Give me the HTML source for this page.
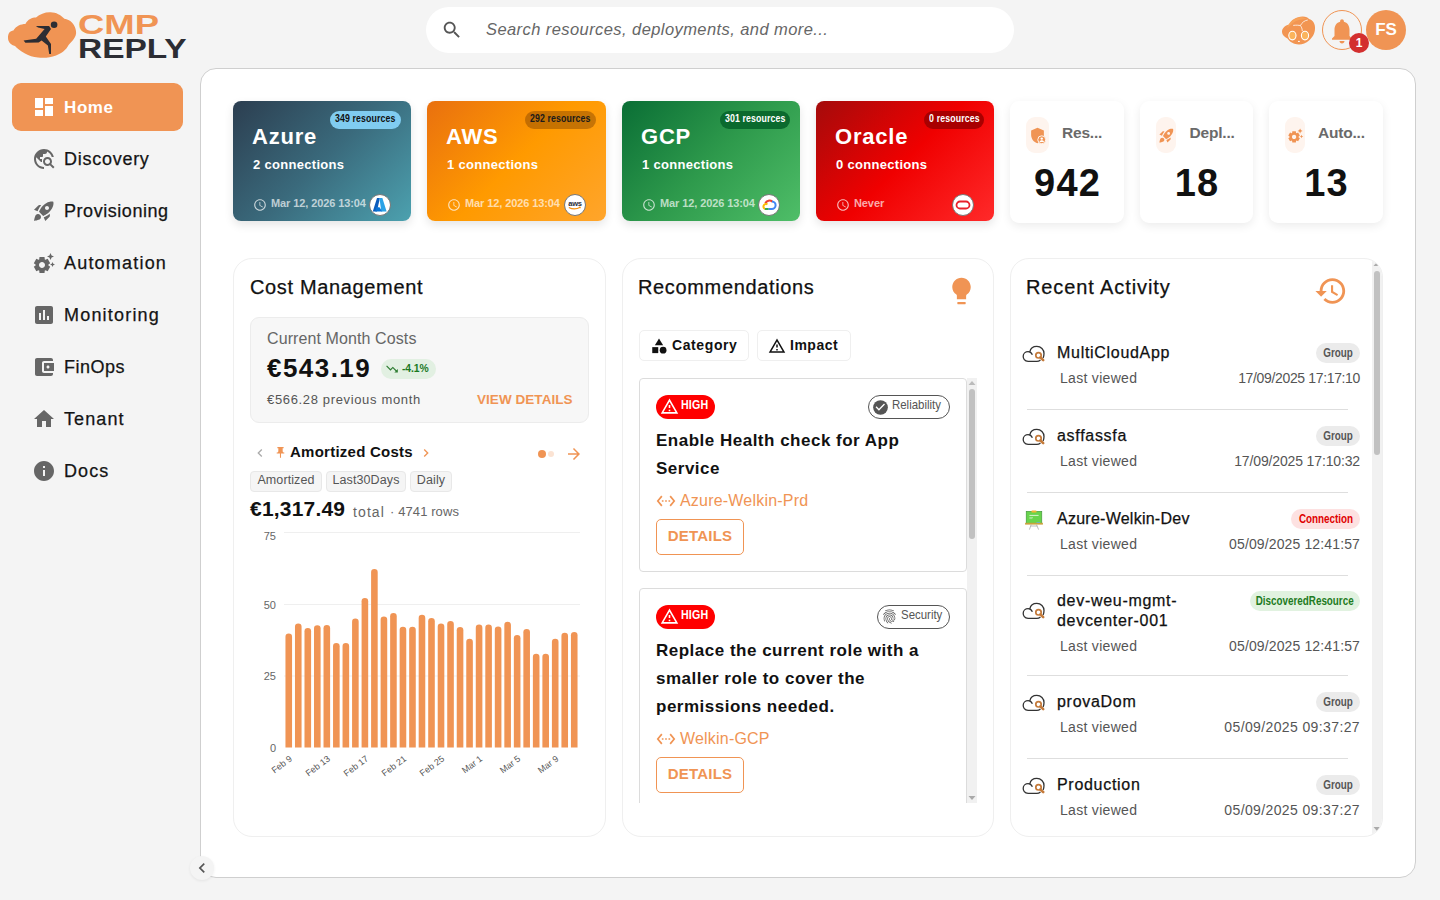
<!DOCTYPE html>
<html><head><meta charset="utf-8">
<style>
*{box-sizing:border-box;margin:0;padding:0}
html,body{width:1440px;height:900px;overflow:hidden}
body{background:#f4f4f4;font-family:"Liberation Sans",sans-serif;color:#141414;position:relative}
.a{position:absolute}
.t{position:absolute;white-space:nowrap;line-height:1}
svg{display:block}
/* sidebar */
.nav{position:absolute;left:12px;width:171px;height:48px;border-radius:9px}
.nav svg{position:absolute;left:20px;top:12px}
.nav span{position:absolute;left:52px;top:15px;font-size:18px;letter-spacing:1.1px;line-height:1;white-space:nowrap;-webkit-text-stroke:.25px #141414}
.nav.act{background:#f09454;color:#fff}
.nav.act span{-webkit-text-stroke:0;font-weight:bold;font-size:17px;letter-spacing:0.6px;top:15.5px;left:52px}
/* main */
#main{position:absolute;left:200px;top:68px;width:1216px;height:810px;background:#fff;border:1px solid #cfcfcf;border-radius:16px}
.cc{position:absolute;top:101px;height:120px;border-radius:8px;box-shadow:0 4px 10px rgba(0,0,0,.10);color:#fff;overflow:hidden}
.cc .nm{position:absolute;left:19px;top:24.5px;font-size:22px;font-weight:bold;line-height:1;letter-spacing:.8px}
.cc .cn{position:absolute;left:20px;top:57px;font-size:13px;font-weight:bold;line-height:1;letter-spacing:.3px}
.cc .bd{position:absolute;right:10px;top:10px;height:18px;border-radius:9px;font-size:10.2px;font-weight:bold;line-height:16.5px;text-align:center;white-space:nowrap}
.cc .bd span{display:inline-block;transform:scaleX(.86);margin:0 -20px;letter-spacing:.15px}
.cc .dt{position:absolute;left:20px;top:97px;font-size:11px;font-weight:bold;line-height:1;color:rgba(255,255,255,.68);letter-spacing:-.1px}
.cc .dt svg{position:absolute;left:0;top:0}
.cc .dt span{position:absolute;left:18px;top:0;white-space:nowrap}
.cc .lg{position:absolute;top:92.5px;width:22px;height:22px;border-radius:50%;background:#fff;border:1px solid #777}
.sc{position:absolute;top:101px;height:122px;border-radius:9px;background:#fff;box-shadow:0 3px 10px rgba(0,0,0,.08)}
.sc .ib{position:absolute;left:16px;top:16px;width:23px;height:36px;border-radius:9px;background:#fef4ee}
.sc .ib svg{position:absolute;left:50%;margin-left:-8.5px;top:10px}
.sc .lb{position:absolute;left:52px;top:23.5px;font-size:15.5px;letter-spacing:-.2px;font-weight:bold;color:#6a6a6a;line-height:1}
.sc .vl{position:absolute;left:0;right:0;top:63px;text-align:center;font-size:38px;font-weight:bold;line-height:1;color:#111;letter-spacing:1.2px;text-indent:1.2px}
.pn{position:absolute;top:258px;width:373px;height:579px;border:1px solid #efefef;border-radius:19px;background:#fff;overflow:hidden}
.pt{position:absolute;font-size:20px;line-height:1;letter-spacing:.45px;color:#111;white-space:nowrap;-webkit-text-stroke:.25px #111}

.gb{position:absolute;left:250px;top:317px;width:339px;height:106px;background:#f7f7f7;border:1px solid #ececec;border-radius:9px}
.chip{position:absolute;top:471px;height:21px;border:1px solid #e8e8e8;background:#f5f5f5;border-radius:4px;font-size:12.5px;line-height:17px;color:#555;text-align:center;white-space:nowrap;letter-spacing:.1px}
.fchip{position:absolute;top:330px;height:31px;border:1px solid #efefef;background:#fff;border-radius:5px;font-size:14px;font-weight:bold;line-height:29px;color:#111;white-space:nowrap}
.rc{position:absolute;left:639px;width:328px;border:1px solid #dcdcdc;border-radius:4px;background:#fff}
.high{position:absolute;left:16px;width:59px;height:24px;border-radius:12px;background:#f00;color:#fff}
.high span{position:absolute;left:25px;top:3px;font-size:13px;font-weight:bold;line-height:1;transform:scaleX(.82);transform-origin:0 0;letter-spacing:.2px}
.tag{position:absolute;height:24px;border:1px solid #555;border-radius:12px;color:#555}
.tag span{position:absolute;top:1.5px;font-size:13px;line-height:1;transform:scaleX(.88);transform-origin:0 0;white-space:nowrap}
.rtitle{position:absolute;left:16px;font-size:17px;font-weight:bold;line-height:28px;letter-spacing:.5px;color:#111;width:300px}
.rlink{position:absolute;left:16px;font-size:16px;color:#f09454;line-height:1;white-space:nowrap;letter-spacing:.2px}
.rlink span{position:absolute;left:24px;top:0}
.dbtn{position:absolute;left:16px;width:88px;height:36px;border:1px solid #f09454;border-radius:5px;color:#f09454;font-size:15px;font-weight:bold;line-height:31px;text-align:center;letter-spacing:.2px}
.ri{position:absolute;left:1011px;width:360px}
.ri .ic{position:absolute;left:7px}
.ri .nmv{position:absolute;left:46px;font-size:16px;line-height:20px;letter-spacing:.7px;color:#111;white-space:nowrap;-webkit-text-stroke:.25px #111}
.ri .lv{position:absolute;left:49px;font-size:14px;line-height:1;color:#555;letter-spacing:.3px;white-space:nowrap}
.ri .dtv{position:absolute;right:11px;font-size:14px;line-height:1;color:#555;letter-spacing:-.35px;white-space:nowrap}
.ri .pill{position:absolute;right:11px;height:20px;border-radius:10px;font-size:12px;font-weight:bold;line-height:20px;padding:0;white-space:nowrap}
.ri .pill span{display:inline-block;transform:scaleX(.82);transform-origin:50% 50%;margin:0 -20px}
.dv{position:absolute;left:1027px;width:321px;height:1px;background:#dedede}
</style></head>
<body>
<!-- LOGO -->
<svg class="a" style="left:0;top:0" width="80" height="64" viewBox="0 0 80 64">
 <path d="M8 38 C8 33 10 31 13.4 30.5 C16 26 21 24 25.4 24 C28 19 32 17.5 36 17.5 C40 14 45 12 50.6 12.2 C56 12.2 61 15 64.4 18.8 C70 19.5 75 24 76 31 C77 37 72 41 68.6 45 C66 50 62 53 56 55.5 C50 58 43 58 38 57.5 C33 57 29 56 25 53.5 C20 51 17 48 15 46 C11 45 8 42 8 38 Z" fill="#f09454"/>
 <circle cx="54.1" cy="24.8" r="3.3" fill="#2c2d33"/>
 <path d="M35.9 26 L49.1 26.1 L51 29 L45.8 36.5 L51 44 L51 54 L49.2 54 L47.9 45.5 L41.6 40.5 L38.6 42.5 L25.4 42.8 L23.6 40.6 L36.2 38.7 L44.6 29 L38 27.6 Z" fill="#2c2d33"/>
</svg>
<div class="t" id="cmp" style="left:78px;top:11.5px;font-size:27px;font-weight:bold;color:#f09454;transform:scaleX(1.35);transform-origin:0 0">CMP</div>
<div class="t" id="reply" style="left:78px;top:36px;font-size:27px;font-weight:bold;color:#2c2d33;transform:scaleX(1.24);transform-origin:0 0">REPLY</div>
<!-- SEARCH -->
<div class="a" style="left:426px;top:7px;width:588px;height:46px;border-radius:23px;background:#fff"></div>
<svg class="a" style="left:441px;top:19px" width="22" height="22" viewBox="0 0 24 24"><path fill="#555" d="M15.5 14h-.79l-.28-.27C15.41 12.59 16 11.11 16 9.5 16 5.91 13.09 3 9.5 3S3 5.91 3 9.5 5.91 16 9.5 16c1.61 0 3.09-.59 4.23-1.57l.27.28v.79l5 4.99L20.49 19l-4.99-5zm-6 0C7.01 14 5 11.99 5 9.5S7.01 5 9.5 5 14 7.01 14 9.5 11.99 14 9.5 14z"/></svg>
<div class="t" style="left:486px;top:21px;font-size:16.5px;font-style:italic;color:#666;letter-spacing:.42px">Search resources, deployments, and more...</div>

<!-- TOP RIGHT -->
<svg class="a" style="left:1278px;top:12px" width="42" height="36" viewBox="1278 12 42 36">
 <path d="M1282 32 C1282 28 1285 25.5 1289 24.5 C1291 20 1296 16.5 1302.8 16.4 C1306 16.4 1308 17.5 1309 19 C1313 20 1315.5 24 1315 29 C1314.8 34 1312 38 1309 40.5 C1306 43.5 1302 44.5 1298.8 44.4 C1294 44.4 1290 42 1287.5 38.5 C1284.5 37 1282 35 1282 32Z" fill="#f29552"/>
 <path d="M1287 28 C1289 21 1296 17 1302 17 L1307 19 C1300 19 1294 21 1291 25z" fill="#f9a85c" opacity=".7"/>
 <path d="M1293.2 25.4 C1296 25 1299 25.2 1300.4 25.6 C1301.5 27 1302.2 28.5 1302.3 31 M1300.4 25.6 C1302 22.5 1304.5 20.5 1307.8 20" fill="none" stroke="#fff" stroke-width=".9" opacity=".85"/>
 <ellipse cx="1292.4" cy="35.6" rx="3.6" ry="4.3" fill="#fbb45c" stroke="#fff" stroke-width="1.1"/>
 <ellipse cx="1305" cy="35.6" rx="3.6" ry="4.3" fill="#fbb45c" stroke="#fff" stroke-width="1.1"/>
 <path d="M1298 41.4 h1.8" stroke="#fff" stroke-width="1"/>
</svg>
<div class="a" style="left:1322px;top:10px;width:40px;height:40px;border-radius:50%;border:1px solid #f09454"></div>
<svg class="a" style="left:1327px;top:16px" width="30" height="30" viewBox="0 0 24 24"><path fill="#f09454" d="M12 22c1.1 0 2-.9 2-2h-4c0 1.1.89 2 2 2zm6-6v-5c0-3.07-1.64-5.64-4.5-6.32V4c0-.83-.67-1.5-1.5-1.5s-1.5.67-1.5 1.5v.68C7.63 5.36 6 7.92 6 11v5l-2 2v1h16v-1l-2-2z"/></svg>
<div class="a" style="left:1366px;top:10px;width:40px;height:40px;border-radius:50%;background:#f09454"></div>
<div class="t" style="left:1366px;top:21px;width:40px;text-align:center;font-size:17px;font-weight:bold;color:#fff">FS</div>
<div class="a" style="left:1349px;top:33px;width:20px;height:20px;border-radius:50%;background:#d32f2f"></div>
<div class="t" style="left:1349px;top:37px;width:20px;text-align:center;font-size:12px;font-weight:bold;color:#fff">1</div>

<!-- SIDEBAR -->
<div class="nav act" style="top:83px"><svg style="left:23px;top:15px" width="18" height="18" viewBox="3 3 18 18"><path fill="#fff" d="M3 13h8V3H3v10zm0 8h8v-6H3v6zm10 0h8V11h-8v10zm0-18v6h8V3h-8z"/></svg><span>Home</span></div>
<div class="nav" style="top:135px"><svg width="24" height="24" viewBox="0 0 24 24"><path fill="#666" d="M19.3 16.9c.4-.7.7-1.5.7-2.4 0-2.5-2-4.5-4.5-4.5S11 12 11 14.5s2 4.5 4.5 4.5c.9 0 1.7-.3 2.4-.7l3.2 3.2 1.4-1.4-3.2-3.2zm-3.8.1c-1.4 0-2.5-1.1-2.5-2.5s1.1-2.5 2.5-2.5 2.5 1.1 2.5 2.5-1.1 2.5-2.5 2.5zM12 20v2C6.48 22 2 17.52 2 12S6.48 2 12 2c4.84 0 8.87 3.44 9.8 8h-2.07c-.64-2.46-2.4-4.47-4.73-5.41V5c0 1.1-.9 2-2 2h-2v2c0 .55-.45 1-1 1H8v2h2v3H9l-4.79-4.79C4.08 10.79 4 11.38 4 12c0 4.41 3.59 8 8 8z"/></svg><span style="letter-spacing:0.73px">Discovery</span></div>
<div class="nav" style="top:187px"><svg width="24" height="24" viewBox="0 0 24 24"><path fill="#666" d="M9.19 6.35c-2.04 2.29-3.44 5.58-3.57 5.89L2 10.69l4.05-4.05c.47-.47 1.15-.68 1.81-.55l1.33.26zM11.17 17s3.74-1.55 5.89-3.7c5.4-5.4 4.5-9.62 4.21-10.57-.95-.3-5.17-1.19-10.57 4.21C8.55 9.09 7 12.83 7 12.83L11.17 17zm6.48-2.19c-2.29 2.04-5.58 3.44-5.89 3.570L13.31 22l4.05-4.05c.47-.47.68-1.15.55-1.81l-.26-1.33zM9 18c0 .83-.34 1.58-.88 2.12C6.94 21.3 2 22 2 22s.7-4.94 1.88-6.12C4.42 15.34 5.17 15 6 15c1.66 0 3 1.34 3 3zm4-9c0-1.1.9-2 2-2s2 .9 2 2-.9 2-2 2-2-.9-2-2z"/></svg><span style="letter-spacing:0.55px">Provisioning</span></div>
<div class="nav" style="top:239px"><svg width="24" height="24" viewBox="0 0 24 24"><path fill="#666" d="M17.41 6.59 15 5.5l2.41-1.09L18.5 2l1.09 2.41L22 5.5l-2.41 1.090L18.5 9l-1.09-2.41zm3.87 6.13L20.5 11l-.78 1.72-1.72.78 1.72.78.78 1.72.78-1.72L23 13.5l-1.72-.78zm-5.04 1.65 1.94 1.47-2.5 4.33-2.24-.94c-.2.13-.42.26-.64.37l-.3 2.4h-5l-.3-2.41c-.22-.11-.43-.23-.64-.37l-2.24.94-2.5-4.33 1.94-1.47c-.01-.11-.01-.24-.01-.36s0-.25.01-.37l-1.94-1.47 2.5-4.33 2.24.94c.2-.13.42-.26.64-.37L7.5 6h5l.3 2.41c.22.11.43.23.64.37l2.24-.94 2.5 4.33-1.94 1.470c.01.12.01.24.01.37s0 .24-.01.36zM13 14c0-1.66-1.34-3-3-3s-3 1.34-3 3 1.34 3 3 3 3-1.34 3-3z"/></svg><span style="letter-spacing:1.2px">Automation</span></div>
<div class="nav" style="top:291px"><svg width="24" height="24" viewBox="0 0 24 24"><path fill="#666" d="M19 3H5c-1.1 0-2 .9-2 2v14c0 1.1.9 2 2 2h14c1.1 0 2-.9 2-2V5c0-1.1-.9-2-2-2zM9 17H7v-7h2v7zm4 0h-2V7h2v10zm4 0h-2v-4h2v4z"/></svg><span style="letter-spacing:1.2px">Monitoring</span></div>
<div class="nav" style="top:343px"><svg width="24" height="24" viewBox="0 0 24 24"><path fill="#666" d="M21 18v1c0 1.1-.9 2-2 2H5c-1.11 0-2-.9-2-2V5c0-1.1.89-2 2-2h14c1.1 0 2 .9 2 2v1h-9c-1.11 0-2 .9-2 2v8c0 1.1.89 2 2 2h9zm-9-2h10V8H12v8zm4-2.5c-.83 0-1.5-.67-1.5-1.5s.67-1.5 1.5-1.5 1.5.67 1.5 1.5-.67 1.5-1.5 1.5z"/></svg><span style="letter-spacing:0.5px">FinOps</span></div>
<div class="nav" style="top:395px"><svg width="24" height="24" viewBox="0 0 24 24"><path fill="#666" d="M10 20v-6h4v6h5v-8h3L12 3 2 12h3v8z"/></svg><span style="letter-spacing:1.1px">Tenant</span></div>
<div class="nav" style="top:447px"><svg width="24" height="24" viewBox="0 0 24 24"><path fill="#666" d="M12 2C6.48 2 2 6.48 2 12s4.48 10 10 10 10-4.48 10-10S17.52 2 12 2zm1 15h-2v-6h2v6zm0-8h-2V7h2v2z"/></svg><span style="letter-spacing:1.1px">Docs</span></div>

<!-- MAIN -->
<div id="main"></div>
<div class="cc" style="left:233px;width:178px;background:linear-gradient(135deg,#2c3e50 0%,#3a6a7c 50%,#4ca1af 100%)">
 <div class="nm">Azure</div><div class="cn">2 connections</div>
 <div class="bd" style="background:#80ccf0;color:#111;width:71px"><span>349 resources</span></div>
 <div class="dt"><svg width="14" height="14" viewBox="0 0 24 24"><path fill="rgba(255,255,255,.72)" d="M11.99 2C6.47 2 2 6.48 2 12s4.47 10 9.99 10C17.52 22 22 17.52 22 12S17.52 2 11.99 2zM12 20c-4.42 0-8-3.58-8-8s3.58-8 8-8 8 3.58 8 8-3.58 8-8 8zm.5-13H11v6l5.25 3.15.75-1.23-4.5-2.67z"/></svg><span>Mar 12, 2026 13:04</span></div>
 <div class="lg" style="left:136px"><svg width="20" height="20" viewBox="0 0 20 20"><path d="M7 2.9 H9.9 L6.9 16.5 H2.8z" fill="#0c5cbc"/><path d="M9.4 2.9 H12.4 L16.6 16.5 H11.3z" fill="#2ba2e6"/><path d="M6.2 12.2 H9.5 L12.3 16.5 H5.3z" fill="#0873d6"/></svg></div>
</div>
<div class="cc" style="left:427px;width:179px;background:linear-gradient(135deg,#e9700f 0%,#ff9a00 50%,#ffa52c 100%)">
 <div class="nm">AWS</div><div class="cn">1 connections</div>
 <div class="bd" style="background:rgba(120,60,0,.42);color:#1a1a1a;width:71px"><span>292 resources</span></div>
 <div class="dt"><svg width="14" height="14" viewBox="0 0 24 24"><path fill="rgba(255,255,255,.72)" d="M11.99 2C6.47 2 2 6.48 2 12s4.47 10 9.99 10C17.52 22 22 17.52 22 12S17.52 2 11.99 2zM12 20c-4.42 0-8-3.58-8-8s3.58-8 8-8 8 3.58 8 8-3.58 8-8 8zm.5-13H11v6l5.25 3.15.75-1.23-4.5-2.67z"/></svg><span>Mar 12, 2026 13:04</span></div>
 <div class="lg" style="left:137px"><svg width="20" height="20" viewBox="0 0 20 20"><text x="10" y="10.6" text-anchor="middle" font-family="Liberation Sans" font-size="7.2" font-weight="bold" fill="#2a2f3a" transform="translate(10 0) scale(1.05 1) translate(-10 0)" letter-spacing="-.2">aws</text><path d="M3.8 12.4 Q9.5 15.5 15.2 12.3" stroke="#f7900a" stroke-width="1.1" fill="none"/><path d="M14 12 L15.5 12.1 L15.2 13.4" stroke="#f7900a" stroke-width=".7" fill="none"/></svg></div>
</div>
<div class="cc" style="left:622px;width:178px;background:linear-gradient(135deg,#0a6e35 0%,#2e9a4c 50%,#4fbe68 100%)">
 <div class="nm">GCP</div><div class="cn">1 connections</div>
 <div class="bd" style="background:#0b6a2e;color:#fff;width:70px"><span>301 resources</span></div>
 <div class="dt"><svg width="14" height="14" viewBox="0 0 24 24"><path fill="rgba(255,255,255,.72)" d="M11.99 2C6.47 2 2 6.48 2 12s4.47 10 9.99 10C17.52 22 22 17.52 22 12S17.52 2 11.99 2zM12 20c-4.42 0-8-3.58-8-8s3.58-8 8-8 8 3.58 8 8-3.58 8-8 8zm.5-13H11v6l5.25 3.15.75-1.23-4.5-2.67z"/></svg><span>Mar 12, 2026 13:04</span></div>
 <div class="lg" style="left:136px"><svg width="20" height="20" viewBox="0 0 20 20" fill="none" stroke-width="2"><path d="M6.3 8.2 A4.6 4.6 0 0 1 13.3 6.6" stroke="#ea4335"/><path d="M13 6.4 A3.6 3.6 0 0 1 12.6 14 H9.3" stroke="#4285f4"/><path d="M9.5 14 H5.6" stroke="#34a853"/><path d="M5.8 14 A2.6 2.6 0 0 1 8.5 9.3" stroke="#fbbc05"/></svg></div>
</div>
<div class="cc" style="left:816px;width:178px;background:linear-gradient(135deg,#a40b0b 0%,#f00000 50%,#ff2a2a 100%)">
 <div class="nm">Oracle</div><div class="cn">0 connections</div>
 <div class="bd" style="background:#a80000;color:#fff;width:60px"><span>0 resources</span></div>
 <div class="dt"><svg width="14" height="14" viewBox="0 0 24 24"><path fill="rgba(255,255,255,.72)" d="M11.99 2C6.47 2 2 6.48 2 12s4.47 10 9.99 10C17.52 22 22 17.52 22 12S17.52 2 11.99 2zM12 20c-4.42 0-8-3.58-8-8s3.58-8 8-8 8 3.58 8 8-3.58 8-8 8zm.5-13H11v6l5.25 3.15.75-1.23-4.5-2.67z"/></svg><span>Never</span></div>
 <div class="lg" style="left:136px"><svg width="20" height="20" viewBox="0 0 20 20"><rect x="3.5" y="6.5" width="13" height="7" rx="3.5" fill="none" stroke="#e8202a" stroke-width="1.8"/></svg></div>
</div>
<div class="sc" style="left:1010px;width:114px"><div class="ib"><svg width="17" height="17" viewBox="0 0 24 24"><path fill="#f09454" d="M12 1 3 5v6c0 5.55 3.84 10.74 9 12 .65-.16 1.27-.38 1.87-.65A6 6 0 0 1 21 13.2V5z"/><circle cx="18" cy="18" r="5.6" fill="#f09454" stroke="#fef4ee" stroke-width="1.4"/><circle cx="18" cy="16.4" r="1.7" fill="#fff"/><path d="M14.8 21c.6-1.5 1.8-2.2 3.2-2.2s2.6.7 3.2 2.2z" fill="#fff"/></svg></div><div class="lb">Res...</div><div class="vl">942</div></div>
<div class="sc" style="left:1140px;width:113px"><div class="ib" style="width:20px"><svg width="17" height="17" viewBox="0 0 24 24"><path fill="#f09454" d="M9.19 6.35c-2.04 2.29-3.44 5.58-3.57 5.890L2 10.69l4.05-4.05c.47-.47 1.150-.68 1.81-.55l1.33.26zM11.17 17s3.74-1.55 5.89-3.7c5.4-5.4 4.5-9.62 4.21-10.57-.95-.3-5.17-1.19-10.57 4.21C8.55 9.09 7 12.83 7 12.83L11.17 17zm6.48-2.19c-2.29 2.04-5.58 3.44-5.89 3.57L13.31 22l4.05-4.05c.47-.47.68-1.15.55-1.81l-.26-1.33zM9 18c0 .83-.34 1.58-.88 2.12C6.94 21.3 2 22 2 22s.7-4.94 1.88-6.12C4.42 15.34 5.17 15 6 15c1.66 0 3 1.34 3 3zm4-9c0-1.1.9-2 2-2s2 .9 2 2-.9 2-2 2-2-.9-2-2z"/></svg></div><div class="lb" style="left:49.5px">Depl...</div><div class="vl">18</div></div>
<div class="sc" style="left:1269px;width:114px"><div class="ib" style="width:20px"><svg width="17" height="17" viewBox="0 0 24 24"><path fill="#f09454" d="M17.41 6.59 15 5.5l2.41-1.09L18.5 2l1.09 2.41L22 5.5l-2.41 1.09L18.5 9l-1.09-2.41zm3.87 6.13L20.5 11l-.78 1.72-1.72.78 1.72.78.78 1.72.78-1.72L23 13.5l-1.72-.78zm-5.04 1.65 1.94 1.47-2.5 4.33-2.24-.94c-.2.13-.42.26-.64.37l-.3 2.4h-5l-.3-2.41c-.22-.11-.43-.23-.64-.37l-2.24.94-2.5-4.33 1.94-1.47c-.01-.11-.01-.24-.01-.36s0-.25.01-.37l-1.94-1.47 2.5-4.33 2.24.94c.2-.13.42-.26.64-.37L7.5 6h5l.3 2.41c.22.11.43.23.64.37l2.24-.94 2.5 4.33-1.94 1.47c.01.12.01.24.01.37s0 .24-.01.36zM13 14c0-1.66-1.34-3-3-3s-3 1.34-3 3 1.34 3 3 3 3-1.34 3-3z"/></svg></div><div class="lb" style="left:49px">Auto...</div><div class="vl">13</div></div>
<div class="pn" style="left:233px"></div><div class="pn" style="left:622px;width:372px"></div><div class="pn" style="left:1010px"><div class="a" style="left:361px;top:0;width:11px;height:576px;background:#f1f1f1"></div><div class="a" style="left:363px;top:12px;width:6px;height:184px;border-radius:3px;background:#c1c1c1"></div><svg class="a" style="left:362px;top:2px" width="8" height="6" viewBox="0 0 8 6"><path d="M4 1 L7.5 5 H.5z" fill="#aaa"/></svg><svg class="a" style="left:362px;top:567px" width="8" height="6" viewBox="0 0 8 6"><path d="M4 5 L7.5 1 H.5z" fill="#aaa"/></svg></div>
<div class="pt" style="left:250px;top:277px;letter-spacing:.65px">Cost Management</div>
<div class="gb"></div>
<div class="t" style="left:267px;top:331px;font-size:16px;color:#666;letter-spacing:.1px">Current Month Costs</div>
<div class="t" style="left:267px;top:354.5px;font-size:26px;font-weight:bold;color:#111;letter-spacing:1.45px">€543.19</div>
<div class="a" style="left:381px;top:359px;width:55px;height:20px;border-radius:10px;background:#e2f0e2"></div>
<svg class="a" style="left:385px;top:362px" width="14" height="14" viewBox="0 0 24 24"><path fill="#2e7d32" d="M16 18l2.29-2.29-4.88-4.88-4 4L2 7.41 3.41 6l6 6 4-4 6.3 6.29L22 12v6z"/></svg>
<div class="t" style="left:402px;top:362.5px;font-size:11.5px;font-weight:bold;color:#1a7a1f;transform:scaleX(.9);transform-origin:0 0;letter-spacing:-.1px">-4.1%</div>
<div class="t" style="left:267px;top:393px;font-size:13px;color:#555;letter-spacing:.65px">€566.28 previous month</div>
<div class="t" style="left:477px;top:393px;font-size:13.5px;font-weight:bold;color:#f09454;letter-spacing:.05px">VIEW DETAILS</div>
<svg class="a" style="left:252px;top:445px" width="16" height="16" viewBox="0 0 24 24"><path fill="#aaa" d="M15.41 7.41L14 6l-6 6 6 6 1.41-1.41L10.83 12z"/></svg>
<svg class="a" style="left:274px;top:446px" width="13" height="13" viewBox="0 0 24 24"><path fill="#f09454" d="M16 9V4h1c.55 0 1-.45 1-1s-.45-1-1-1H7c-.55 0-1 .45-1 1s.45 1 1 1h1v5c0 1.66-1.34 3-3 3v2h5.97v7l1 1 1-1v-7H19v-2c-1.66 0-3-1.34-3-3z"/></svg>
<div class="t" style="left:290px;top:444px;font-size:15px;font-weight:bold;color:#111;letter-spacing:.25px">Amortized Costs</div>
<svg class="a" style="left:418px;top:445px" width="16" height="16" viewBox="0 0 24 24"><path fill="#f09454" d="M10 6L8.59 7.41 13.17 12l-4.58 4.59L10 18l6-6z"/></svg>
<div class="a" style="left:538px;top:450px;width:8px;height:8px;border-radius:50%;background:#f09454"></div>
<div class="a" style="left:548px;top:451px;width:6px;height:6px;border-radius:50%;background:#fbe3d3"></div>
<svg class="a" style="left:565px;top:445px" width="18" height="18" viewBox="0 0 24 24"><path fill="#f09454" d="M12 4l-1.41 1.41L16.17 11H4v2h12.17l-5.58 5.59L12 20l8-8z"/></svg>
<div class="chip" style="left:250px;width:72px">Amortized</div><div class="chip" style="left:326px;width:80px">Last30Days</div><div class="chip" style="left:410px;width:42px">Daily</div>
<div class="t" style="left:250px;top:498px;font-size:21px;font-weight:bold;color:#111;letter-spacing:.2px">€1,317.49</div>
<div class="t" style="left:353px;top:505px;font-size:14px;color:#666;letter-spacing:1.1px">total</div>
<div class="t" style="left:390px;top:505px;font-size:13px;color:#666;letter-spacing:.1px">· 4741 rows</div>
<svg class="a" style="left:250px;top:525px" width="340" height="260" viewBox="250 525 340 260"><text x="276" y="751.5" text-anchor="end" font-family="Liberation Sans" font-size="11" fill="#666">0</text><line x1="284" y1="676" x2="580" y2="676" stroke="#efefef" stroke-width="1"/><text x="276" y="680" text-anchor="end" font-family="Liberation Sans" font-size="11" fill="#666">25</text><line x1="284" y1="604.5" x2="580" y2="604.5" stroke="#efefef" stroke-width="1"/><text x="276" y="608.5" text-anchor="end" font-family="Liberation Sans" font-size="11" fill="#666">50</text><line x1="284" y1="532.5" x2="580" y2="532.5" stroke="#efefef" stroke-width="1"/><text x="276" y="539.7" text-anchor="end" font-family="Liberation Sans" font-size="11" fill="#666">75</text><path d="M285.46 747.5 V636.80 a3.3 3.3 0 0 1 6.6 0 V747.5z" fill="#f09454"/><path d="M294.97 747.5 V626.80 a3.3 3.3 0 0 1 6.6 0 V747.5z" fill="#f09454"/><path d="M304.49 747.5 V631.30 a3.3 3.3 0 0 1 6.6 0 V747.5z" fill="#f09454"/><path d="M314.01 747.5 V628.60 a3.3 3.3 0 0 1 6.6 0 V747.5z" fill="#f09454"/><path d="M323.52 747.5 V628.30 a3.3 3.3 0 0 1 6.6 0 V747.5z" fill="#f09454"/><path d="M333.04 747.5 V646.30 a3.3 3.3 0 0 1 6.6 0 V747.5z" fill="#f09454"/><path d="M342.55 747.5 V646.30 a3.3 3.3 0 0 1 6.6 0 V747.5z" fill="#f09454"/><path d="M352.07 747.5 V621.90 a3.3 3.3 0 0 1 6.6 0 V747.5z" fill="#f09454"/><path d="M361.59 747.5 V601.30 a3.3 3.3 0 0 1 6.6 0 V747.5z" fill="#f09454"/><path d="M371.10 747.5 V572.30 a3.3 3.3 0 0 1 6.6 0 V747.5z" fill="#f09454"/><path d="M380.62 747.5 V619.80 a3.3 3.3 0 0 1 6.6 0 V747.5z" fill="#f09454"/><path d="M390.14 747.5 V616.30 a3.3 3.3 0 0 1 6.6 0 V747.5z" fill="#f09454"/><path d="M399.65 747.5 V630.00 a3.3 3.3 0 0 1 6.6 0 V747.5z" fill="#f09454"/><path d="M409.17 747.5 V630.00 a3.3 3.3 0 0 1 6.6 0 V747.5z" fill="#f09454"/><path d="M418.68 747.5 V618.00 a3.3 3.3 0 0 1 6.6 0 V747.5z" fill="#f09454"/><path d="M428.20 747.5 V621.30 a3.3 3.3 0 0 1 6.6 0 V747.5z" fill="#f09454"/><path d="M437.72 747.5 V626.80 a3.3 3.3 0 0 1 6.6 0 V747.5z" fill="#f09454"/><path d="M447.23 747.5 V624.30 a3.3 3.3 0 0 1 6.6 0 V747.5z" fill="#f09454"/><path d="M456.75 747.5 V630.30 a3.3 3.3 0 0 1 6.6 0 V747.5z" fill="#f09454"/><path d="M466.26 747.5 V642.10 a3.3 3.3 0 0 1 6.6 0 V747.5z" fill="#f09454"/><path d="M475.78 747.5 V627.90 a3.3 3.3 0 0 1 6.6 0 V747.5z" fill="#f09454"/><path d="M485.30 747.5 V627.90 a3.3 3.3 0 0 1 6.6 0 V747.5z" fill="#f09454"/><path d="M494.81 747.5 V629.70 a3.3 3.3 0 0 1 6.6 0 V747.5z" fill="#f09454"/><path d="M504.33 747.5 V625.10 a3.3 3.3 0 0 1 6.6 0 V747.5z" fill="#f09454"/><path d="M513.85 747.5 V638.30 a3.3 3.3 0 0 1 6.6 0 V747.5z" fill="#f09454"/><path d="M523.36 747.5 V632.30 a3.3 3.3 0 0 1 6.6 0 V747.5z" fill="#f09454"/><path d="M532.88 747.5 V657.00 a3.3 3.3 0 0 1 6.6 0 V747.5z" fill="#f09454"/><path d="M542.39 747.5 V657.00 a3.3 3.3 0 0 1 6.6 0 V747.5z" fill="#f09454"/><path d="M551.91 747.5 V642.10 a3.3 3.3 0 0 1 6.6 0 V747.5z" fill="#f09454"/><path d="M561.43 747.5 V636.10 a3.3 3.3 0 0 1 6.6 0 V747.5z" fill="#f09454"/><path d="M570.94 747.5 V635.30 a3.3 3.3 0 0 1 6.6 0 V747.5z" fill="#f09454"/><text x="292.8" y="760.0" text-anchor="end" transform="rotate(-37 292.8 760.0)" font-family="Liberation Sans" font-size="9" fill="#555">Feb 9</text><text x="330.8" y="760.0" text-anchor="end" transform="rotate(-37 330.8 760.0)" font-family="Liberation Sans" font-size="9" fill="#555">Feb 13</text><text x="368.9" y="760.0" text-anchor="end" transform="rotate(-37 368.9 760.0)" font-family="Liberation Sans" font-size="9" fill="#555">Feb 17</text><text x="407.0" y="760.0" text-anchor="end" transform="rotate(-37 407.0 760.0)" font-family="Liberation Sans" font-size="9" fill="#555">Feb 21</text><text x="445.0" y="760.0" text-anchor="end" transform="rotate(-37 445.0 760.0)" font-family="Liberation Sans" font-size="9" fill="#555">Feb 25</text><text x="483.1" y="760.0" text-anchor="end" transform="rotate(-37 483.1 760.0)" font-family="Liberation Sans" font-size="9" fill="#555">Mar 1</text><text x="521.1" y="760.0" text-anchor="end" transform="rotate(-37 521.1 760.0)" font-family="Liberation Sans" font-size="9" fill="#555">Mar 5</text><text x="559.2" y="760.0" text-anchor="end" transform="rotate(-37 559.2 760.0)" font-family="Liberation Sans" font-size="9" fill="#555">Mar 9</text></svg>
<div class="pt" style="left:638px;top:277px;letter-spacing:.65px">Recommendations</div>
<svg class="a" style="left:942.5px;top:273px" width="37" height="37" viewBox="0 0 24 24"><path fill="#f09454" d="M12 3C8.7 3 6 5.7 6 9c0 2.1 1.1 3.9 2.7 5 .3.2.3.6.3.9V17h6v-2.1c0-.3.1-.7.4-.9C17 12.9 18 11.1 18 9c0-3.3-2.7-6-6-6z"/><rect x="9.3" y="18.8" width="5.4" height="1.5" rx=".3" fill="#f09454"/></svg>
<div class="fchip" style="left:639px;width:110px"><svg class="a" style="left:10px;top:6px" width="18" height="18" viewBox="0 0 24 24"><path fill="#111" d="M12 2l-5.5 9h11z"/><circle cx="17.5" cy="17.5" r="4.5" fill="#111"/><path fill="#111" d="M3 13.5h8v8H3z"/></svg><span class="a" style="left:32px;top:0;letter-spacing:.6px">Category</span></div>
<div class="fchip" style="left:757px;width:94px"><svg class="a" style="left:10px;top:6px" width="18" height="18" viewBox="0 0 24 24"><path fill="#111" d="M12 5.99L19.53 19H4.47L12 5.99M12 2L1 21h22L12 2zm1 14h-2v2h2v-2zm0-6h-2v4h2v-4z"/></svg><span class="a" style="left:32px;top:0;letter-spacing:.5px">Impact</span></div>
<div class="a" style="left:639px;top:378px;width:338px;height:425px;overflow:hidden">
<div class="a" style="left:328px;top:0;width:10px;height:425px;background:#f1f1f1"></div>
<div class="a" style="left:330px;top:11px;width:6px;height:150px;border-radius:3px;background:#c1c1c1"></div>
<svg class="a" style="left:329px;top:2px" width="8" height="6" viewBox="0 0 8 6"><path d="M4 1 L7.5 5 H.5z" fill="#bbb"/></svg>
<svg class="a" style="left:329px;top:417px" width="8" height="6" viewBox="0 0 8 6"><path d="M4 5 L7.5 1 H.5z" fill="#aaa"/></svg>
<div class="rc" style="left:0;top:0;height:194px">
<div class="high" style="top:16px"><svg class="a" style="left:3.5px;top:2px" width="19" height="19" viewBox="0 0 24 24"><path fill="#fff" d="M12 5.99L19.53 19H4.47L12 5.99M12 2L1 21h22L12 2zm1 14h-2v2h2v-2zm0-6h-2v4h2v-4z"/></svg><span>HIGH</span></div>
<div class="tag" style="left:228px;top:16px;width:82px"><svg class="a" style="left:2px;top:1.5px" width="19" height="19" viewBox="0 0 24 24"><circle cx="12" cy="12" r="9.3" fill="#555"/><path fill="#fff" d="M10 17l-5-5 1.41-1.41L10 14.17l7.59-7.59L19 8l-9 9z" transform="translate(1.5 1.5) scale(.85)"/></svg><span style="left:23px">Reliability</span></div>
<div class="rtitle" style="top:48px">Enable Health check for App Service</div>
<div class="rlink" style="top:114px"><svg class="a" style="left:-0.5px;top:-2px" width="20" height="20" viewBox="0 0 24 24"><path fill="#f09454" d="M7.77 6.76L6.23 5.48.82 12l5.41 6.52 1.54-1.28L3.42 12l4.35-5.24zM7 13h2v-2H7v2zm10-2h-2v2h2v-2zm-6 2h2v-2h-2v2zm6.77-7.52l-1.54 1.28L20.58 12l-4.35 5.24 1.54 1.28L23.18 12l-5.41-6.52z"/></svg><span>Azure-Welkin-Prd</span></div>
<div class="dbtn" style="top:140px">DETAILS</div>
</div>
<div class="rc" style="left:0;top:210px;height:240px">
<div class="high" style="top:16px"><svg class="a" style="left:3.5px;top:2px" width="19" height="19" viewBox="0 0 24 24"><path fill="#fff" d="M12 5.99L19.53 19H4.47L12 5.99M12 2L1 21h22L12 2zm1 14h-2v2h2v-2zm0-6h-2v4h2v-4z"/></svg><span>HIGH</span></div>
<div class="tag" style="left:237px;top:16px;width:73px"><svg class="a" style="left:3px;top:2px" width="17" height="17" viewBox="0 0 24 24"><path fill="#555" d="M17.81 4.47c-.08 0-.16-.02-.23-.06C15.66 3.42 14 3 12.01 3c-1.98 0-3.86.47-5.57 1.41-.24.13-.54.04-.68-.2-.13-.24-.04-.55.2-.68C7.82 2.52 9.86 2 12.01 2c2.13 0 3.98.47 6.020 1.52.25.13.34.43.21.67-.09.18-.26.28-.43.28zM3.5 9.72c-.1 0-.2-.03-.29-.09-.23-.16-.28-.47-.12-.7.99-1.4 2.25-2.5 3.75-3.27C9.98 4.04 14 4.03 17.15 5.65c1.5.77 2.76 1.86 3.75 3.25.16.22.11.54-.12.7-.23.16-.54.11-.7-.12-.9-1.26-2.04-2.25-3.39-2.94-2.87-1.47-6.54-1.47-9.4.01-1.36.7-2.5 1.7-3.4 2.96-.08.14-.23.21-.39.21zm6.25 12.07c-.13 0-.26-.05-.35-.15-.87-.87-1.34-1.43-2.01-2.64-.69-1.23-1.05-2.73-1.05-4.34 0-2.97 2.54-5.39 5.66-5.39s5.66 2.42 5.66 5.39c0 .28-.22.5-.5.5s-.5-.22-.5-.5c0-2.42-2.09-4.39-4.66-4.39-2.570 0-4.66 1.97-4.66 4.39 0 1.44.32 2.77.93 3.85.64 1.15 1.08 1.64 1.85 2.42.19.2.19.51 0 .71-.11.1-.24.15-.37.15zm7.17-1.85c-1.19 0-2.24-.3-3.1-.89-1.49-1.01-2.38-2.65-2.38-4.39 0-.28.22-.5.5-.5s.5.22.5.5c0 1.41.72 2.74 1.94 3.56.71.48 1.54.71 2.54.71.24 0 .64-.03 1.04-.1.27-.05.53.13.58.41.05.27-.13.53-.41.58-.57.11-1.07.12-1.21.12zM14.91 22c-.04 0-.09-.01-.13-.02-1.59-.44-2.63-1.03-3.72-2.1-1.4-1.39-2.17-3.24-2.17-5.22 0-1.62 1.38-2.94 3.08-2.94 1.7 0 3.08 1.32 3.08 2.94 0 1.07.93 1.94 2.08 1.94s2.08-.87 2.08-1.94c0-3.77-3.25-6.83-7.25-6.83-2.84 0-5.44 1.58-6.61 4.03-.39.81-.59 1.76-.59 2.8 0 .78.07 2.01.67 3.61.1.26-.03.55-.29.64-.26.1-.55-.04-.64-.29-.49-1.31-.73-2.61-.73-3.96 0-1.2.23-2.29.68-3.24 1.33-2.79 4.28-4.6 7.51-4.6 4.55 0 8.25 3.51 8.25 7.83 0 1.62-1.38 2.94-3.080 2.94s-3.08-1.32-3.08-2.94c0-1.07-.93-1.94-2.08-1.94s-2.08.87-2.08 1.94c0 1.71.66 3.31 1.87 4.51.95.94 1.86 1.46 3.27 1.85.27.07.42.35.35.61-.05.23-.26.38-.47.38z"/></svg><span style="left:23px">Security</span></div>
<div class="rtitle" style="top:48px">Replace the current role with a smaller role to cover the permissions needed.</div>
<div class="rlink" style="top:142px"><svg class="a" style="left:-0.5px;top:-2px" width="20" height="20" viewBox="0 0 24 24"><path fill="#f09454" d="M7.77 6.76L6.23 5.48.82 12l5.41 6.52 1.54-1.28L3.42 12l4.35-5.24zM7 13h2v-2H7v2zm10-2h-2v2h2v-2zm-6 2h2v-2h-2v2zm6.77-7.52l-1.54 1.28L20.58 12l-4.35 5.24 1.54 1.28L23.18 12l-5.41-6.52z"/></svg><span>Welkin-GCP</span></div>
<div class="dbtn" style="top:168px">DETAILS</div>
</div>
</div>
<div class="pt" style="left:1026px;top:277px;letter-spacing:.9px">Recent Activity</div>
<svg class="a" style="left:1314px;top:274px" width="34" height="34" viewBox="0 0 24 24"><path fill="#f09454" d="M13 3c-4.97 0-9 4.03-9 9H1l3.89 3.89.07.14L9 12H6c0-3.87 3.13-7 7-7s7 3.13 7 7-3.13 7-7 7c-1.93 0-3.68-.79-4.94-2.060l-1.42 1.42C8.27 19.99 10.51 21 13 21c4.97 0 9-4.03 9-9s-4.03-9-9-9zm-1 5v5l4.28 2.54.72-1.21-3.5-2.08V8H12z"/></svg>


<div class="ri" style="top:343px">
<div class="ic" style="top:-3px"><svg width="32" height="26" viewBox="0 0 32 26" fill="none"><path d="M10.1 21.4 C6.5 21.4 5.2 18.5 5.2 16.2 C5.2 13.5 7.5 11.6 10.1 11.6 C12 11.6 13.5 12.8 14.4 14.7 M11.8 11.8 C12.5 8.5 15.5 6.4 18.8 6.4 C23 6.4 26 9.5 26 13.6 C26 15 25.6 16.8 25.1 17.9 M10.1 21.4 L18.8 21.4 C20 21.4 21.5 20.8 22.5 20" stroke="#333" stroke-width="1.3"/><circle cx="20.5" cy="15.3" r="2.7" stroke="#c47a3a" stroke-width="1.7"/><path d="M22.4 17.3 L25.2 20.1" stroke="#c47a3a" stroke-width="2.6" stroke-linecap="round"/></svg></div>
<div class="nmv" style="top:0">MultiCloudApp</div>
<div class="pill" style="top:0px;background:#ebebeb;color:#555;width:44px;text-align:center"><span>Group</span></div>
<div class="lv" style="top:28px">Last viewed</div>
<div class="dtv" style="top:28px">17/09/2025 17:17:10</div>
</div>
<div class="ri" style="top:426px">
<div class="ic" style="top:-3px"><svg width="32" height="26" viewBox="0 0 32 26" fill="none"><path d="M10.1 21.4 C6.5 21.4 5.2 18.5 5.2 16.2 C5.2 13.5 7.5 11.6 10.1 11.6 C12 11.6 13.5 12.8 14.4 14.7 M11.8 11.8 C12.5 8.5 15.5 6.4 18.8 6.4 C23 6.4 26 9.5 26 13.6 C26 15 25.6 16.8 25.1 17.9 M10.1 21.4 L18.8 21.4 C20 21.4 21.5 20.8 22.5 20" stroke="#333" stroke-width="1.3"/><circle cx="20.5" cy="15.3" r="2.7" stroke="#c47a3a" stroke-width="1.7"/><path d="M22.4 17.3 L25.2 20.1" stroke="#c47a3a" stroke-width="2.6" stroke-linecap="round"/></svg></div>
<div class="nmv" style="top:0">asffassfa</div>
<div class="pill" style="top:0px;background:#ebebeb;color:#555;width:44px;text-align:center"><span>Group</span></div>
<div class="lv" style="top:28px">Last viewed</div>
<div class="dtv" style="top:28px;letter-spacing:-0.14px">17/09/2025 17:10:32</div>
</div>
<div class="ri" style="top:509px">
<div class="ic" style="top:-5px"><svg width="32" height="32" viewBox="0 0 32 32"><rect x="8.2" y="7.3" width="15.6" height="12" fill="#68d44c" stroke="#3f8f3a" stroke-width=".6"/><rect x="13.5" y="6.4" width="5" height="2.1" rx=".6" fill="#f2b532"/><path d="M11.4 11.4h9.2" stroke="#e8f8e0" stroke-width=".9"/><path d="M11.4 13.5h3.6M11.4 14.6h3" stroke="#c8ecc0" stroke-width=".6"/><rect x="18.5" y="18" width="3.5" height="1" fill="#55b8d8"/><rect x="7.1" y="18.8" width="17.8" height="1.8" fill="#c9a23c"/><path d="M13.2 20.6 L11.4 25.6 M18.5 20.6 L20.6 25.6 M12.5 22 H19.2" stroke="#aaa" stroke-width=".8"/></svg></div>
<div class="nmv" style="top:0;letter-spacing:.25px">Azure-Welkin-Dev</div>
<div class="pill" style="top:0px;background:#fde1e1;color:#e00000;width:69px;text-align:center"><span>Connection</span></div>
<div class="lv" style="top:28px">Last viewed</div>
<div class="dtv" style="top:28px;letter-spacing:0.13px">05/09/2025 12:41:57</div>
</div>
<div class="ri" style="top:591px">
<div class="ic" style="top:6px"><svg width="32" height="26" viewBox="0 0 32 26" fill="none"><path d="M10.1 21.4 C6.5 21.4 5.2 18.5 5.2 16.2 C5.2 13.5 7.5 11.6 10.1 11.6 C12 11.6 13.5 12.8 14.4 14.7 M11.8 11.8 C12.5 8.5 15.5 6.4 18.8 6.4 C23 6.4 26 9.5 26 13.6 C26 15 25.6 16.8 25.1 17.9 M10.1 21.4 L18.8 21.4 C20 21.4 21.5 20.8 22.5 20" stroke="#333" stroke-width="1.3"/><circle cx="20.5" cy="15.3" r="2.7" stroke="#c47a3a" stroke-width="1.7"/><path d="M22.4 17.3 L25.2 20.1" stroke="#c47a3a" stroke-width="2.6" stroke-linecap="round"/></svg></div>
<div class="nmv" style="top:0">dev-weu-mgmt-<br>devcenter-001</div>
<div class="pill" style="top:0px;background:#e1f2e0;color:#1e7b23;width:110px;text-align:center"><span>DiscoveredResource</span></div>
<div class="lv" style="top:48px">Last viewed</div>
<div class="dtv" style="top:48px;letter-spacing:0.13px">05/09/2025 12:41:57</div>
</div>
<div class="ri" style="top:692px">
<div class="ic" style="top:-3px"><svg width="32" height="26" viewBox="0 0 32 26" fill="none"><path d="M10.1 21.4 C6.5 21.4 5.2 18.5 5.2 16.2 C5.2 13.5 7.5 11.6 10.1 11.6 C12 11.6 13.5 12.8 14.4 14.7 M11.8 11.8 C12.5 8.5 15.5 6.4 18.8 6.4 C23 6.4 26 9.5 26 13.6 C26 15 25.6 16.8 25.1 17.9 M10.1 21.4 L18.8 21.4 C20 21.4 21.5 20.8 22.5 20" stroke="#333" stroke-width="1.3"/><circle cx="20.5" cy="15.3" r="2.7" stroke="#c47a3a" stroke-width="1.7"/><path d="M22.4 17.3 L25.2 20.1" stroke="#c47a3a" stroke-width="2.6" stroke-linecap="round"/></svg></div>
<div class="nmv" style="top:0">provaDom</div>
<div class="pill" style="top:0px;background:#ebebeb;color:#555;width:44px;text-align:center"><span>Group</span></div>
<div class="lv" style="top:28px">Last viewed</div>
<div class="dtv" style="top:28px;letter-spacing:0.38px">05/09/2025 09:37:27</div>
</div>
<div class="ri" style="top:774.6px">
<div class="ic" style="top:-3px"><svg width="32" height="26" viewBox="0 0 32 26" fill="none"><path d="M10.1 21.4 C6.5 21.4 5.2 18.5 5.2 16.2 C5.2 13.5 7.5 11.6 10.1 11.6 C12 11.6 13.5 12.8 14.4 14.7 M11.8 11.8 C12.5 8.5 15.5 6.4 18.8 6.4 C23 6.4 26 9.5 26 13.6 C26 15 25.6 16.8 25.1 17.9 M10.1 21.4 L18.8 21.4 C20 21.4 21.5 20.8 22.5 20" stroke="#333" stroke-width="1.3"/><circle cx="20.5" cy="15.3" r="2.7" stroke="#c47a3a" stroke-width="1.7"/><path d="M22.4 17.3 L25.2 20.1" stroke="#c47a3a" stroke-width="2.6" stroke-linecap="round"/></svg></div>
<div class="nmv" style="top:0">Production</div>
<div class="pill" style="top:0px;background:#ebebeb;color:#555;width:44px;text-align:center"><span>Group</span></div>
<div class="lv" style="top:28px">Last viewed</div>
<div class="dtv" style="top:28px;letter-spacing:0.38px">05/09/2025 09:37:27</div>
</div>
<div class="dv" style="top:409px"></div>
<div class="dv" style="top:492px"></div>
<div class="dv" style="top:575px"></div>
<div class="dv" style="top:675px"></div>
<div class="dv" style="top:758px"></div>
<div class="a" style="left:190px;top:856px;width:24px;height:24px;border-radius:50%;background:#f4f4f4;box-shadow:0 1px 3px rgba(0,0,0,.07)"></div>
<svg class="a" style="left:192px;top:858px" width="20" height="20" viewBox="0 0 24 24"><path fill="#555" d="M15.41 7.41L14 6l-6 6 6 6 1.41-1.41L10.83 12z"/></svg>

</body></html>
